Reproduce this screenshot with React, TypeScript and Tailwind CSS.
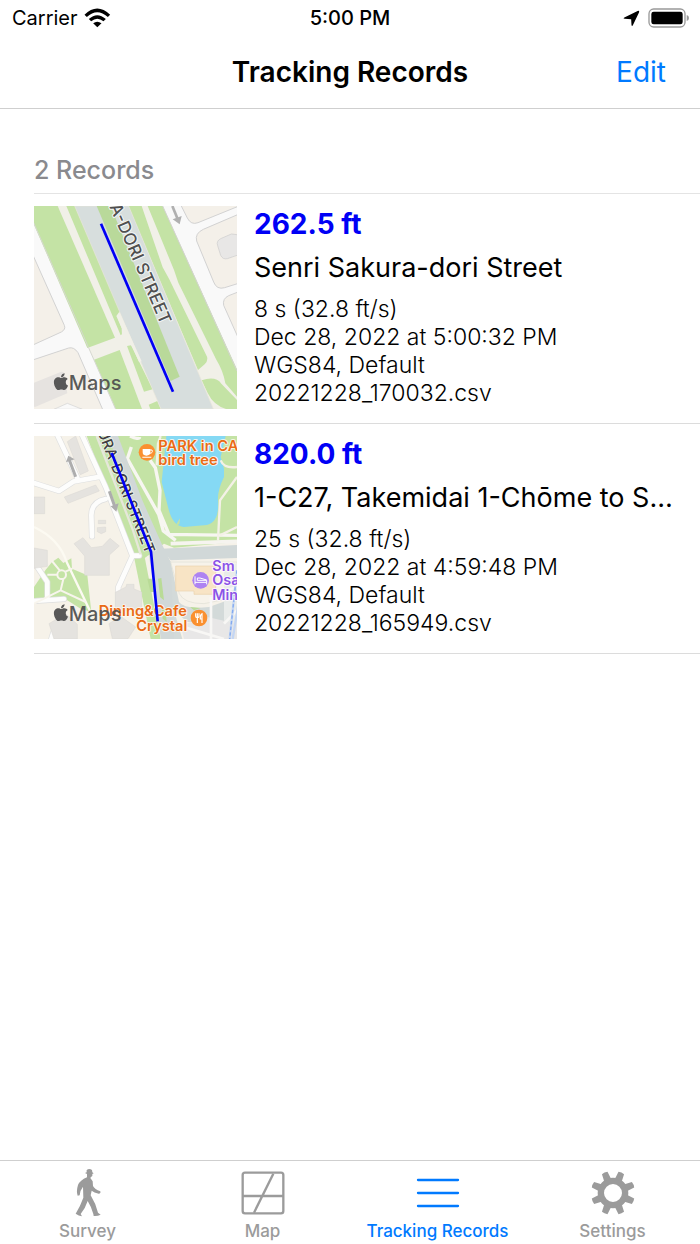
import type { ReactNode } from "react";
import { FaApple } from "react-icons/fa";

function WifiIcon() {
  return (
    <svg viewBox="252 20 80 60" className="h-5 w-[27px]" aria-hidden="true">
      <path d="M253 40 Q291 3 330 40 L323 47 Q291 19 260 47 Z" />
      <path d="M266 53 Q291 30 317 53 L310 60 Q291 44 273 60 Z" />
      <path d="M279 66 Q291 56 304 66 L291.500 78 Z" />
    </svg>
  );
}

function LocationIcon() {
  return (
    <svg viewBox="823 28 50 50" className="size-[17px]" aria-hidden="true">
      <path d="M866 31 Q872 28 870 35 L852 73 Q849 78 848 72 L847 55 L828 54 Q822 53 827 50 Z" fill="#000" />
    </svg>
  );
}

function BatteryIcon() {
  return (
    <svg viewBox="898 21 126 60" className="h-5 w-[42px]" aria-hidden="true">
      <rect x="901" y="24" width="108" height="54" rx="14" fill="none" stroke="#999" strokeWidth="4" />
      <rect x="908" y="32" width="94" height="38" rx="7" fill="#000" />
      <path d="M1014 42 Q1021 44 1021 51 Q1021 58 1014 60 Z" fill="#999" />
    </svg>
  );
}

function MapsMark() {
  return (
    <g fill="#505050" fillOpacity="0.95">
      <FaApple x="82" y="528" size="58" color="#505050" />
      <text x="134" y="581" fontSize="60" fontWeight="500">
        Maps
      </text>
    </g>
  );
}

function StreetMap() {
  return (
    <svg viewBox="30 30 609 609" className="size-full font-['Inter',sans-serif]" role="img" aria-label="Senri Sakura-dori Street route">
      <rect x="30" y="30" width="609" height="609" fill="#f9f9f9" />
      <g fill="#f4f0e9" stroke="#d2d2d2" strokeWidth="3">
        <path d="M20 162 L121 388 Q126 400 112 408 L20 450 Z" />
        <path d="M20 494 L134 456 Q150 452 162 470 L238 645 H20 Z" />
        <path d="M467 20 L490 66 Q501 88 522 80 L650 28 V20 Z" />
        <path d="M650 52 L538 100 Q512 112 518 135 L569 258 Q578 282 602 275 L650 260 Z" />
        <path d="M650 285 L614 299 Q595 308 599 328 L650 442 Z" />
      </g>
      <path d="M30 560 L110 528 Q120 525 122 535 L130 592 L35 632 H30 Z" fill="#e6e3e0" />
      <path d="M90 640 L130 622 L175 640 Z" fill="#f9f9f9" stroke="#d2d2d2" strokeWidth="2" />
      <path d="M639 116 L622 114 L590 128 Q576 135 581 149 L590 178 Q596 191 610 188 L639 178" fill="#e8e7e6" stroke="#ccc" strokeWidth="2" />
      <path d="M30 30 H416 L639 525 V639 H275 L30 82 Z" fill="#f1f0e8" />
      <path d="M30 30 H101 L273 425 L190 456 L30 86 Z" fill="#c4e3a5" />
      <path d="M210 491 L287 462 L354 639 H275 Z" fill="#c4e3a5" />
      <path d="M28 78 L276 642" stroke="#d6d8d0" strokeWidth="3" />
      <path d="M127 30 H153 L288 345 L284 373 L299 410 L290 418 Z" fill="#c4e3a5" />
      <path d="M309 450 L321 448 L386 580 L360 587 Z M374 626 L400 615 L410 639 H379 Z" fill="#c4e3a5" />
      <path d="M313 30 H353 L416 214 L435 248 L548 480 Q554 492 542 505 L522 522 Z" fill="#c4e3a5" />
      <path d="M371 30 H416 L639 520 V602 L604 562 Q598 525 577 491 L463 260 L450 222 Z" fill="#c4e3a5" />
      <path d="M533 553 Q575 539 592 563 L639 612 V639 H606 Q568 627 551 591 Z" fill="#c4e3a5" />
      <path d="M416 30 L639 525" stroke="#d3d3cf" strokeWidth="3" />
      <path d="M152 30 H314 L568 639 H411 Z" fill="#d7dedd" stroke="#e8e5da" strokeWidth="2" />
      <path d="M286 347 L277 360 L293 397 L294 419 L325 452 L345 498 L353 496 Z" fill="#f1f0e8" />
      <path d="M218 30 H260 L467 542 L440 555 Z" fill="#b9d99a" />
      <path d="M445 30 L460 67" stroke="#b0b0b0" strokeWidth="8" />
      <path d="M446 70 L473 60 L467 85 Z" fill="#b0b0b0" />
      <text transform="translate(411 388) rotate(66.500)" textAnchor="end" fontSize="51" fontWeight="500" fill="#505050" stroke="#f5f7f5" strokeWidth="6" strokeLinejoin="round" paintOrder="stroke">
        A-DORI STREET
      </text>
      <MapsMark />
      <path d="M231 83 L447 587" stroke="#0000f5" strokeWidth="8" />
    </svg>
  );
}

function ParkMap() {
  return (
    <svg viewBox="30 27 609 609" className="size-full font-['Inter',sans-serif]" role="img" aria-label="Takemidai 1-Chome route">
      <rect x="30" y="27" width="609" height="609" fill="#f6f2e9" />
      <path d="M188 27 H639 V345 L450 362 L420 350 L350 402 L325 385 Z" fill="#c4e3a5" />
      <path d="M427 27 L413 165 L432 240 Q445 298 480 300 L548 294 Q587 285 582 220 Q580 190 600 150 V125 L590 90 L605 27 Z" fill="#85d9f4" />
      <path d="M454 296 L468 274 L466 292 Z" fill="#c4e3a5" />
      <path d="M318 27 Q345 40 347 30 M322 60 L310 95 L404 262 L418 312 L455 340 M378 100 L394 122 L408 190 L405 250 L435 322 L639 325" fill="none" stroke="#f7f6f1" strokeWidth="10" strokeLinejoin="round" />
      <path d="M410 27 L402 50 L398 115 M582 340 L588 220 L639 150 M590 100 Q600 125 639 120 M588 325 L639 300" fill="none" stroke="#f4f1e7" strokeWidth="7" />
      <path d="M30 480 L64 430 L84 405 L103 392 L118 408 L142 394 L144 425 L190 445 L202 555 L170 545 L130 520 L30 528 Z" fill="#c4e3a5" />
      <path d="M330 390 L360 380 L410 636 H380 Z" fill="#c4e3a5" />
      <g fill="none" stroke="#dedfdf" strokeWidth="18" strokeLinejoin="round" strokeLinecap="round">
        <path d="M172 20 L245 180 L325 386 L346 386 M20 165 L105 192 L150 163 L230 149 M98 20 L160 152 M245 216 Q202 225 202 265 L204 328 M325 388 L283 480 V540 M40 420 L70 465 V510 M30 522 L120 516 M82 636 L92 604 L130 576" />
      </g>
      <g fill="none" stroke="#fdfdfc" strokeWidth="14" strokeLinejoin="round" strokeLinecap="round">
        <path d="M172 20 L245 180 L325 386 L346 386 M20 165 L105 192 L150 163 L230 149 M98 20 L160 152 M245 216 Q202 225 202 265 L204 328 M325 388 L283 480 V540 M40 420 L70 465 V510 M30 522 L120 516 M82 636 L92 604 L130 576" />
      </g>
      <path d="M30 300 Q105 335 128 405 L202 560" fill="none" stroke="#fcfaf2" strokeWidth="7" />
      <g fill="none" stroke="#f8f5ed" strokeWidth="6">
        <circle cx="113" cy="443" r="13" />
        <path d="M99 443 H70 M107 430 L84 402 M124 434 L145 425 M118 456 L110 490 L30 530 M110 490 L185 525" />
      </g>
      <g fill="#e5e3df" stroke="#d8d6d3" strokeWidth="1.500">
        <path d="M130 44 L155 27 L193 132 L169 143 Z M121 210 L215 174 L226 192 L132 229 Z M30 210 H62 V260 H30 Z M30 363 L70 370 V418 L30 424 Z" />
        <path d="M150 350 L177 332 L202 362 L235 358 L258 334 L286 357 L256 384 V445 H182 V387 Z" />
        <path d="M223 280 H245 V290 H223 Z M220 302 L245 300 V314 L232 320 L220 314 Z M274 496 L306 480 L308 472 H330 V486 L353 495 V550 H274 Z" />
        <path d="M75 590 L125 560 L160 592 V636 H90 Z M255 590 L290 568 L335 600 L312 635 H265 Z" />
      </g>
      <path d="M350 350 Q435 395 440 404 L465 525 Q480 548 555 540 L639 510 V585 H490 L450 550 L475 636 H411 L375 386 Z" fill="#d3dad9" />
      <path d="M412 365 L639 354 V393 L440 400 Z" fill="#d1d8d8" />
      <path d="M440 350 L639 343" stroke="#f6f4ef" strokeWidth="11" />
      <path d="M242 27 H282 L355 220 L413 350 L440 405 L450 636 H411 L378 386 L330 280 Z" fill="#d1d8d8" />
      <path d="M232 27 H252 L346 285 L382 384 L360 384 Z" fill="#c4e3a5" />
      <path d="M218 27 L327 310 L350 382" fill="none" stroke="#e6e7da" strokeWidth="7" />
      <path d="M440 405 H639 V510 L540 530 Q480 530 466 500 Z" fill="#f7f3ea" stroke="#e0dfd5" strokeWidth="2" />
      <path d="M455 417 H575 V502 H510 V492 H455 Z" fill="#f8e4c5" stroke="#ebd2ac" strokeWidth="2" />
      <path d="M600 410 H639 V636 H600 Z" fill="#e9ecea" />
      <path d="M470 595 L550 570 L639 590 V636 H480 Z" fill="#e8e7e7" />
      <path d="M561 510 V636 M480 600 L600 636 M610 490 L639 480 M600 590 L639 550" stroke="#f8f7f5" strokeWidth="8" />
      <path d="M639 430 L617 636 M650 490 L626 636" stroke="#c4d6f3" strokeWidth="7" />
      <path d="M639 430 L617 636" stroke="#83aaf0" strokeWidth="4" strokeDasharray="10 7" />
      <path d="M402 455 L412 453 L420 520 L408 510 Z M413 540 L425 546 L428 585 L416 575 Z M370 455 H383 L390 495 H379 Z M498 540 L530 543 L510 550 Z" fill="#b9db97" />
      <g fill="#adadad" stroke="#adadad">
        <path d="M155 149 L136 99 M256 193 L272 238" strokeWidth="9" />
        <path d="M126 106 L133 86 L152 97 Z M260 238 L284 229 L277 254 Z" stroke="none" />
      </g>
      <text transform="translate(365 382) rotate(68.500)" textAnchor="end" fontSize="44" fontWeight="500" fill="#404040" stroke="#eef2eb" strokeWidth="5" strokeLinejoin="round" paintOrder="stroke">
        URA-DORI STREET
      </text>
      <g fill="#e96b16" stroke="#fff9ef" strokeWidth="5" strokeLinejoin="round" paintOrder="stroke" fontSize="44" fontWeight="600">
        <text x="403" y="72">PARK in CA</text>
        <text x="403" y="115">bird tree</text>
        <text x="489" y="566" textAnchor="end">Dining&amp;Cafe</text>
        <text x="490" y="611" textAnchor="end">Crystal</text>
      </g>
      <g fill="#8b54e6" stroke="#fff9ff" strokeWidth="5" strokeLinejoin="round" paintOrder="stroke" fontSize="43" fontWeight="600">
        <text x="565" y="432">Sm</text>
        <text x="565" y="475">Osa</text>
        <text x="565" y="518">Min</text>
      </g>
      <circle cx="369" cy="76" r="25" fill="#fa9030" />
      <path d="M356 66 H379 V76 Q379 86 367 86 Q356 86 356 76 Z M355 89 H382 V92 H355 Z" fill="#fff" />
      <path d="M378 69 H384 Q388 78 377 79" fill="none" stroke="#fff" strokeWidth="3" />
      <circle cx="530" cy="460" r="25" fill="#ae83f2" />
      <path d="M513 448 V472 M513 466 H548 V472 M520 460 H548 V466 M520 460 V453 H528 L548 459" fill="none" stroke="#fff" strokeWidth="3" />
      <circle cx="525" cy="573" r="25" fill="#fa9030" />
      <path d="M515 559 V568 Q515 572 520 572 Q525 572 525 568 V559 M520 559 V588 M534 588 V560 Q528 563 529 576 H534" fill="none" stroke="#fff" strokeWidth="3.500" />
      <MapsMark />
      <path d="M263 78 L381 374 L401 583" fill="none" stroke="#0000f5" strokeWidth="8" strokeLinejoin="round" />
    </svg>
  );
}

function WalkerIcon() {
  return (
    <svg viewBox="222 54 84 150" className="h-[50px] w-7" fill="currentColor" aria-hidden="true">
      <path d="M260 60 Q268 54 276 60 L277 67 L281 70 L277 72 Q279 79 273 81 L271 84 L278 94 L279 108 Q284 118 301 124 Q303 131 296 131 Q282 128 275 122 L272 136 Q287 160 294 188 L302 194 Q293 199 281 198 L280 192 Q274 170 263 153 Q256 175 242 192 L246 199 Q236 198 227 191 Q242 166 250 143 L249 110 Q240 121 239 136 L233 137 Q228 125 234 105 Q240 91 261 82 L261 72 L255 69 L260 67 Z" />
    </svg>
  );
}

function GridMapIcon() {
  return (
    <svg viewBox="720 63 132 132" className="size-11" fill="none" stroke="currentColor" strokeWidth="7" aria-hidden="true">
      <rect x="725" y="68" width="122" height="122" rx="7" />
      <path d="M726 138 H847 M817 71 L759 188" />
    </svg>
  );
}

function LinesIcon() {
  return (
    <svg viewBox="198 63 132 132" className="size-11" stroke="currentColor" strokeWidth="7" strokeLinecap="round" aria-hidden="true">
      <path d="M204 90 H324 M204 129 H324 M204 168 H324" />
    </svg>
  );
}

const teeth = [22.5, 67.5, 112.5, 157.5, 202.5, 247.5, 292.5, 337.5];

function GearIcon() {
  return (
    <svg viewBox="-66 -66 132 132" className="size-11" fill="currentColor" aria-hidden="true">
      <circle r="36.500" fill="none" stroke="currentColor" strokeWidth="19" />
      {teeth.map((angle) => (
        <path key={angle} d="M-11 -42 L-9 -65 Q0 -68 9 -65 L11 -42 Z" transform={`rotate(${angle})`} />
      ))}
    </svg>
  );
}

type TrackRecord = {
  distance: string;
  name: string;
  details: string[];
  map: ReactNode;
};

const records: TrackRecord[] = [
  {
    distance: "262.5 ft",
    name: "Senri Sakura-dori Street",
    details: ["8 s (32.8 ft/s)", "Dec 28, 2022 at 5:00:32 PM", "WGS84, Default", "20221228_170032.csv"],
    map: <StreetMap />,
  },
  {
    distance: "820.0 ft",
    name: "1-C27, Takemidai 1-Chōme to Senri",
    details: ["25 s (32.8 ft/s)", "Dec 28, 2022 at 4:59:48 PM", "WGS84, Default", "20221228_165949.csv"],
    map: <ParkMap />,
  },
];

const tabs = [
  { label: "Survey", icon: <WalkerIcon />, active: false },
  { label: "Map", icon: <GridMapIcon />, active: false },
  { label: "Tracking Records", icon: <LinesIcon />, active: true },
  { label: "Settings", icon: <GearIcon />, active: false },
];

export default function App() {
  return (
    <div className="flex min-h-screen flex-col bg-white font-['Inter',sans-serif] text-black">
      <header className="border-b border-[#cfcfcf]">
        <div className="grid h-9 grid-cols-[1fr_auto_1fr] items-center px-[10px] text-[20px]">
          <div className="flex items-center gap-[6px] pl-[2px]">
            <span>Carrier</span>
            <WifiIcon />
          </div>
          <span className="text-center font-medium">5:00 PM</span>
          <div className="flex items-center justify-end gap-2">
            <LocationIcon />
            <BatteryIcon />
          </div>
        </div>
        <div className="grid h-[72px] grid-cols-[1fr_auto_1fr] items-center px-[34px]">
          <h1 className="col-start-2 text-[28px] font-semibold">Tracking Records</h1>
          <button type="button" className="justify-self-end text-[28px] text-[#007aff]">
            Edit
          </button>
        </div>
      </header>

      <main className="flex-1 pt-11 pl-[34px]">
        <h2 className="h-[41px] border-b border-[#e4e4e4] text-[25px] leading-[34px] font-medium text-[#8a8a8e]">2 Records</h2>
        <ul>
          {records.map((record) => (
            <li key={record.distance} className="flex gap-[17px] border-b border-[#dcdcdc] pt-3 pb-[14px]">
              <div className="size-[203px] shrink-0">{record.map}</div>
              <div className="min-w-0 flex-1 pr-5">
                <p className="text-[28px] leading-9 font-bold text-[#0000f5]">{record.distance}</p>
                <p className="truncate pt-[5px] text-[27px] leading-[42px]">{record.name}</p>
                <div className="pt-[6px] text-[23px] leading-7 font-light">
                  {record.details.map((line) => (
                    <p key={line}>{line}</p>
                  ))}
                </div>
              </div>
            </li>
          ))}
        </ul>
      </main>

      <nav className="grid h-[84px] grid-cols-4 border-t border-[#cfcfcf]" aria-label="Main">
        {tabs.map((tab) => (
          <a
            key={tab.label}
            href="#"
            aria-current={tab.active ? "page" : undefined}
            className={`flex flex-col items-center pt-[7px] text-[17px] leading-5 font-medium whitespace-nowrap ${tab.active ? "text-[#007aff]" : "text-[#9b9b9b]"}`}
          >
            <span className="flex h-[50px] items-center">{tab.icon}</span>
            <span className="pt-[3px]">{tab.label}</span>
          </a>
        ))}
      </nav>
    </div>
  );
}
